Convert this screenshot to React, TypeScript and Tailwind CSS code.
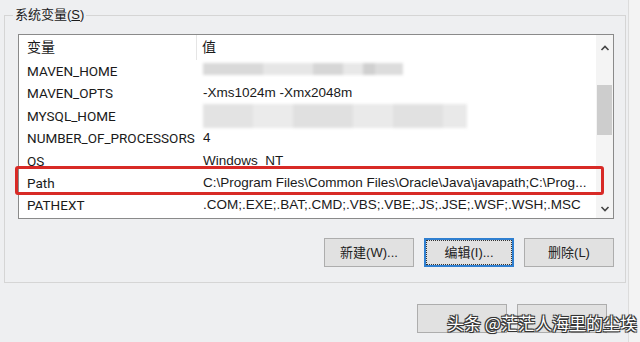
import React from "react";

const rows: { name: string; value?: string; blur?: number }[] = [
  { name: "MAVEN_HOME", blur: 1 },
  { name: "MAVEN_OPTS", value: "-Xms1024m -Xmx2048m" },
  { name: "MYSQL_HOME", blur: 2 },
  { name: "NUMBER_OF_PROCESSORS", value: "4" },
  { name: "OS", value: "Windows_NT" },
  { name: "Path", value: "C:\\Program Files\\Common Files\\Oracle\\Java\\javapath;C:\\Prog..." },
  { name: "PATHEXT", value: ".COM;.EXE;.BAT;.CMD;.VBS;.VBE;.JS;.JSE;.WSF;.WSH;.MSC" },
];

const font = { fontFamily: '"Liberation Sans", "Noto Sans CJK SC", sans-serif' };
const nameFont = { fontFamily: 'Roboto, "Noto Sans CJK SC", sans-serif' };

function Btn({ label, focused }: { label: string; focused?: boolean }) {
  return (
    <div
      className={
        "w-[90px] h-[29px] flex items-center justify-center bg-[#e1e1e1] text-[13px] text-[#222] " +
        (focused ? "border-2 border-[#2f7fd0]" : "border border-[#adadad]")
      }
    >
      {focused ? (
        <div className="w-full h-full border border-dotted border-[#333] flex items-center justify-center">
          {label}
        </div>
      ) : (
        label
      )}
    </div>
  );
}

export default function App() {
  return (
    <div
      className="relative w-[640px] h-[342px] bg-[#eeeff1] overflow-hidden text-[#1a1a1a]"
      style={font}
    >
      {/* window right edge */}
      <div className="absolute right-0 top-0 w-[12px] h-full border-l border-[#dcdcdc] bg-[#f3f3f3]" />

      {/* group box */}
      <div className="relative ml-[4px] mt-[15px] w-[622px] h-[268px] border border-[#d5d5d5] pt-[18px] pl-[13px]">
        <div className="absolute left-[8px] -top-[11px] px-[2px] bg-[#eeeff1] text-[13px] leading-[20px]">
          系统变量(<span className="underline">S</span>)
        </div>

        {/* list box */}
        <div className="flex w-[596px] h-[185px] border border-[#8a8a8a] bg-white">
          <div className="flex-1 min-w-0 overflow-hidden flex flex-col text-[13.5px]">
            <div className="flex h-[25px] items-center shrink-0 text-[14px]">
              <div className="w-[178px] pl-[8px] border-r border-[#e5e5e5] h-full flex items-center">变量</div>
              <div className="pl-[5px]">值</div>
            </div>
            {rows.map((r) => (
              <div key={r.name} className="flex h-[22.4px] items-center shrink-0 whitespace-nowrap">
                <div className="w-[178px] shrink-0 pl-[8px]" style={nameFont}>
                  {r.name}
                </div>
                <div className="pl-[6px] relative">
                  {r.value}
                  {r.blur === 1 && (
                    <div className="flex h-[12px] mt-[-4px] blur-[1.5px]">
                      <div className="w-[60px] bg-[#d9d9d9]" />
                      <div className="w-[50px] bg-[#e6e6e6]" />
                      <div className="w-[30px] bg-[#d6d6d6]" />
                      <div className="w-[20px] bg-[#e8e8e8]" />
                      <div className="w-[12px] bg-[#d0d0d0]" />
                      <div className="w-[28px] bg-[#dcdcdc]" />
                    </div>
                  )}
                  {r.blur === 2 && (
                    <div className="flex h-[24px] mt-[1px] blur-[1.5px]">
                      <div className="w-[50px] bg-[#e3e3e3]" />
                      <div className="w-[40px] bg-[#ebebeb]" />
                      <div className="w-[60px] bg-[#e0e0e0]" />
                      <div className="w-[40px] bg-[#eaeaea]" />
                      <div className="w-[50px] bg-[#e1e1e1]" />
                      <div className="w-[24px] bg-[#e9e9e9]" />
                    </div>
                  )}
                </div>
              </div>
            ))}
          </div>
          {/* scrollbar */}
          <div className="w-[17px] shrink-0 bg-[#f4f4f4] flex flex-col items-center">
            <svg width="10" height="8" viewBox="0 0 10 8" className="mt-[9px]">
              <path d="M1.5 6 L5 2.5 L8.5 6" fill="none" stroke="#444" strokeWidth="1.6" />
            </svg>
            <div className="w-[15px] h-[50px] bg-[#cdcdcd] mt-[33px]" />
            <div className="flex-1" />
            <svg width="10" height="8" viewBox="0 0 10 8" className="mb-[5px]">
              <path d="M1.5 2 L5 5.5 L8.5 2" fill="none" stroke="#444" strokeWidth="1.6" />
            </svg>
          </div>
        </div>

        {/* red highlight */}
        <div className="absolute left-[10px] top-[150px] w-[589px] h-[29px] border-[3px] border-[#d82a26] rounded-[3px]" />

        {/* buttons */}
        <div className="flex justify-end gap-[10px] mt-[19px] pr-[11px]">
          <Btn label="新建(W)..." />
          <Btn label="编辑(I)..." focused />
          <Btn label="删除(L)" />
        </div>
      </div>

      {/* bottom buttons */}
      <div className="flex gap-[10px] ml-[417px] mt-[21px]">
        <div className="w-[90px] h-[29px] bg-[#e1e1e1] border border-[#adadad]" />
        <div className="w-[90px] h-[29px] bg-[#e1e1e1] border border-[#adadad]" />
      </div>

      {/* watermark */}
      <div
        className="absolute left-[447px] top-[310px] text-[17px] leading-[26px] text-white whitespace-nowrap"
        style={{
          fontFamily: '"Noto Sans CJK SC", sans-serif',
          textShadow:
            "1px 1px 0 #333, -1px -1px 0 #333, 1px -1px 0 #333, -1px 1px 0 #333, 0 0 2px #000",
        }}
      >
        头条 @茫茫人海里的尘埃
      </div>
    </div>
  );
}
